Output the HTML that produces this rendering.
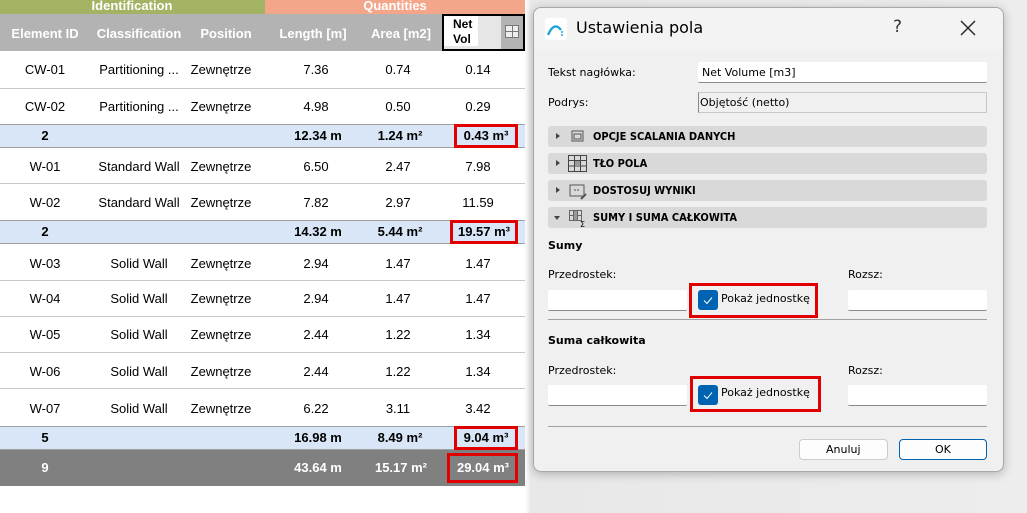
<!DOCTYPE html>
<html><head><meta charset="utf-8"><style>
*{box-sizing:border-box;margin:0;padding:0}
body{width:1027px;height:513px;position:relative;overflow:hidden;background:#fff;font-family:"Liberation Sans",Arial,sans-serif}
.a{position:absolute}
.t{position:absolute;font-size:13px;color:#000;white-space:nowrap}
.c{transform:translateX(-50%)}
.hd{color:#fff;font-weight:bold;font-size:13px}
.row{position:absolute;left:0;width:525px;border-bottom:1px solid #c8c8c8}
.sub{background:#d9e6f7;border-bottom:1px solid #a0a0a0;border-top:1px solid #a0a0a0}
.red{position:absolute;border:3px solid #e00000}
.d{font-family:"Segoe UI","DejaVu Sans",sans-serif;font-size:11px;color:#000;position:absolute;white-space:nowrap}
.inp{position:absolute;background:#fff;border-bottom:1px solid #8a8a8a;border-radius:2px}
.bar{position:absolute;left:548px;width:439px;height:21px;background:#d9d9d9;border-radius:3px}
.bar span{position:absolute;left:45px;top:4px;font-weight:bold;font-size:11px;font-family:"DejaVu Sans",sans-serif;transform:scaleX(.9);transform-origin:left}
.tri{position:absolute;left:8px;top:7px;width:0;height:0;border-left:4px solid #444;border-top:3.5px solid transparent;border-bottom:3.5px solid transparent}
.cb{position:absolute;width:20px;height:20px;background:#0063b1;border-radius:3px}
</style></head><body>
<div class="a" style="left:525px;top:0;width:502px;height:513px;background:linear-gradient(90deg,#fff 0,#e8e8e8 6px,#ededed 100%)"></div>
<!-- table -->
<div class="a" style="left:0;top:0;width:265px;height:14px;background:#a2b464"></div>
<div class="a" style="left:265px;top:0;width:260px;height:14px;background:#f4a68a"></div>
<div class="t hd c" style="left:132px;top:-2px">Identification</div>
<div class="t hd c" style="left:395px;top:-2px">Quantities</div>
<div class="a" style="left:0;top:14px;width:525px;height:37px;background:#b3b3b3"></div>
<div class="t hd c" style="left:45px;top:26px">Element ID</div>
<div class="t hd c" style="left:139px;top:26px">Classification</div>
<div class="t hd c" style="left:226px;top:26px">Position</div>
<div class="t hd c" style="left:313px;top:26px">Length [m]</div>
<div class="t hd c" style="left:401px;top:26px">Area [m2]</div>
<div class="a" style="left:442px;top:14px;width:83px;height:37px;border:2px solid #000;background:#b3b3b3"></div>
<div class="a" style="left:444px;top:16px;width:57px;height:33px;background:#e6e6e6"></div>
<div class="a" style="left:444px;top:16px;width:34px;height:30px;background:#fff"></div>
<div class="t" style="left:453px;top:17px;font-weight:bold;font-size:12px">Net</div>
<div class="t" style="left:453px;top:32px;font-weight:bold;font-size:12px">Vol</div>
<div class="a" style="left:505px;top:25px;width:14px;height:13px;border:1px solid #777;background:linear-gradient(#777,#777) 6px 0/1px 100% no-repeat,linear-gradient(#777,#777) 0 5px/100% 1px no-repeat,#eee"></div>

<div class="row" style="top:51px;height:38px"></div>
<div class="row" style="top:89px;height:35px;border:none"></div>
<div class="row sub" style="top:124px;height:24px"></div>
<div class="row" style="top:148px;height:36px"></div>
<div class="row" style="top:184px;height:36px;border:none"></div>
<div class="row sub" style="top:220px;height:24px"></div>
<div class="row" style="top:244px;height:37px"></div>
<div class="row" style="top:281px;height:36px"></div>
<div class="row" style="top:317px;height:36px"></div>
<div class="row" style="top:353px;height:36px"></div>
<div class="row" style="top:389px;height:37px;border:none"></div>
<div class="row sub" style="top:426px;height:24px"></div>
<div class="a" style="left:0;top:450px;width:525px;height:36px;background:#808080"></div>

<div class="t c" style="left:45px;top:62px">CW-01</div><div class="t c" style="left:139px;top:62px">Partitioning ...</div><div class="t c" style="left:221px;top:62px">Zewnętrze</div><div class="t c" style="left:316px;top:62px">7.36</div><div class="t c" style="left:398px;top:62px">0.74</div><div class="t c" style="left:478px;top:62px">0.14</div>
<div class="t c" style="left:45px;top:99px">CW-02</div><div class="t c" style="left:139px;top:99px">Partitioning ...</div><div class="t c" style="left:221px;top:99px">Zewnętrze</div><div class="t c" style="left:316px;top:99px">4.98</div><div class="t c" style="left:398px;top:99px">0.50</div><div class="t c" style="left:478px;top:99px">0.29</div>
<div class="t c" style="left:45px;top:128px;font-weight:bold">2</div><div class="t c" style="left:318px;top:128px;font-weight:bold">12.34 m</div><div class="t c" style="left:400px;top:128px;font-weight:bold">1.24 m²</div><div class="t c" style="left:486px;top:128px;font-weight:bold">0.43 m³</div>
<div class="t c" style="left:45px;top:159px">W-01</div><div class="t c" style="left:139px;top:159px">Standard Wall</div><div class="t c" style="left:221px;top:159px">Zewnętrze</div><div class="t c" style="left:316px;top:159px">6.50</div><div class="t c" style="left:398px;top:159px">2.47</div><div class="t c" style="left:478px;top:159px">7.98</div>
<div class="t c" style="left:45px;top:195px">W-02</div><div class="t c" style="left:139px;top:195px">Standard Wall</div><div class="t c" style="left:221px;top:195px">Zewnętrze</div><div class="t c" style="left:316px;top:195px">7.82</div><div class="t c" style="left:398px;top:195px">2.97</div><div class="t c" style="left:478px;top:195px">11.59</div>
<div class="t c" style="left:45px;top:224px;font-weight:bold">2</div><div class="t c" style="left:318px;top:224px;font-weight:bold">14.32 m</div><div class="t c" style="left:400px;top:224px;font-weight:bold">5.44 m²</div><div class="t c" style="left:484px;top:224px;font-weight:bold">19.57 m³</div>
<div class="t c" style="left:45px;top:256px">W-03</div><div class="t c" style="left:139px;top:256px">Solid Wall</div><div class="t c" style="left:221px;top:256px">Zewnętrze</div><div class="t c" style="left:316px;top:256px">2.94</div><div class="t c" style="left:398px;top:256px">1.47</div><div class="t c" style="left:478px;top:256px">1.47</div>
<div class="t c" style="left:45px;top:291px">W-04</div><div class="t c" style="left:139px;top:291px">Solid Wall</div><div class="t c" style="left:221px;top:291px">Zewnętrze</div><div class="t c" style="left:316px;top:291px">2.94</div><div class="t c" style="left:398px;top:291px">1.47</div><div class="t c" style="left:478px;top:291px">1.47</div>
<div class="t c" style="left:45px;top:327px">W-05</div><div class="t c" style="left:139px;top:327px">Solid Wall</div><div class="t c" style="left:221px;top:327px">Zewnętrze</div><div class="t c" style="left:316px;top:327px">2.44</div><div class="t c" style="left:398px;top:327px">1.22</div><div class="t c" style="left:478px;top:327px">1.34</div>
<div class="t c" style="left:45px;top:364px">W-06</div><div class="t c" style="left:139px;top:364px">Solid Wall</div><div class="t c" style="left:221px;top:364px">Zewnętrze</div><div class="t c" style="left:316px;top:364px">2.44</div><div class="t c" style="left:398px;top:364px">1.22</div><div class="t c" style="left:478px;top:364px">1.34</div>
<div class="t c" style="left:45px;top:401px">W-07</div><div class="t c" style="left:139px;top:401px">Solid Wall</div><div class="t c" style="left:221px;top:401px">Zewnętrze</div><div class="t c" style="left:316px;top:401px">6.22</div><div class="t c" style="left:398px;top:401px">3.11</div><div class="t c" style="left:478px;top:401px">3.42</div>
<div class="t c" style="left:45px;top:430px;font-weight:bold">5</div><div class="t c" style="left:318px;top:430px;font-weight:bold">16.98 m</div><div class="t c" style="left:400px;top:430px;font-weight:bold">8.49 m²</div><div class="t c" style="left:486px;top:430px;font-weight:bold">9.04 m³</div>
<div class="t c" style="left:45px;top:460px;font-weight:bold;color:#fff">9</div><div class="t c" style="left:318px;top:460px;font-weight:bold;color:#fff">43.64 m</div><div class="t c" style="left:401px;top:460px;font-weight:bold;color:#fff">15.17 m²</div><div class="t c" style="left:483px;top:460px;font-weight:bold;color:#fff">29.04 m³</div>

<div class="red" style="left:454px;top:124px;width:64px;height:24px"></div>
<div class="red" style="left:450px;top:220px;width:68px;height:24px"></div>
<div class="red" style="left:454px;top:426px;width:64px;height:24px"></div>
<div class="red" style="left:447px;top:453px;width:71px;height:30px"></div>

<!-- dialog -->
<div class="a" style="left:533px;top:7px;width:471px;height:465px;background:#f0f0f0;border:1px solid #a8a8a8;border-radius:8px;box-shadow:0 2px 10px rgba(0,0,0,.25)"></div>
<div class="a" style="left:534px;top:8px;width:469px;height:41px;background:#f3f3f3;border-radius:8px 8px 0 0"></div>
<svg class="a" style="left:545px;top:18px" width="22" height="22" viewBox="0 0 22 22"><rect width="22" height="22" rx="3" fill="#fff"/><path d="M3 17 Q9 3 16 12" stroke="#1fa3d8" stroke-width="2.4" fill="none"/><circle cx="17" cy="14" r="1" fill="#1fa3d8"/><circle cx="17" cy="17" r="1" fill="#1fa3d8"/></svg>
<div class="d" style="left:576px;top:18px;font-size:16px">Ustawienia pola</div>
<div class="d" style="left:893px;top:17px;font-size:17px;color:#333">?</div>
<svg class="a" style="left:960px;top:20px" width="16" height="16"><path d="M1 1L15 15M15 1L1 15" stroke="#222" stroke-width="1.4"/></svg>

<div class="d" style="left:548px;top:66px">Tekst nagłówka:</div>
<div class="inp" style="left:698px;top:62px;width:289px;height:21px"></div>
<div class="d" style="left:702px;top:66px">Net Volume [m3]</div>
<div class="d" style="left:548px;top:96px">Podrys:</div>
<div class="a" style="left:698px;top:92px;width:289px;height:21px;border:1px solid #c8c8c8;border-left-color:#888"></div>
<div class="d" style="left:700px;top:96px">Objętość (netto)</div>

<div class="bar" style="top:126px"><div class="tri"></div><svg class="a" style="left:22px;top:4px" width="14" height="13"><rect x="2" y="1" width="11" height="10" fill="none" stroke="#555"/><rect x="4" y="4" width="7" height="5" fill="none" stroke="#555"/></svg><span>OPCJE SCALANIA DANYCH</span></div>
<div class="bar" style="top:153px"><div class="tri"></div><svg class="a" style="left:20px;top:2px" width="19" height="17"><path d="M0.5 0.5h18v16h-18zM6.5 0.5v16M12.5 0.5v16M0.5 5.5h18M0.5 11h18" stroke="#444" fill="none"/><rect x="7" y="6" width="5" height="5" fill="#999"/></svg><span>TŁO POLA</span></div>
<div class="bar" style="top:180px"><div class="tri"></div><svg class="a" style="left:20px;top:2px" width="20" height="18"><path d="M2 3h14v11H2z" stroke="#555" fill="none"/><path d="M6 8h6" stroke="#555" stroke-dasharray="2 1"/><path d="M13 17l5-5" stroke="#555" stroke-width="2"/></svg><span>DOSTOSUJ WYNIKI</span></div>
<div class="bar" style="top:207px"><div class="a" style="left:6px;top:9px;border-top:4px solid #444;border-left:3.5px solid transparent;border-right:3.5px solid transparent"></div><svg class="a" style="left:20px;top:1px" width="20" height="20"><path d="M1.5 2.5h12v10h-12zM5.5 2.5v10M9.5 2.5v10M1.5 7.5h12" stroke="#666" fill="none"/><rect x="6" y="3" width="3" height="9" fill="#999"/><text x="12" y="19" font-size="8" font-family="DejaVu Sans">Σ</text></svg><span>SUMY I SUMA CAŁKOWITA</span></div>

<div class="d" style="left:548px;top:239px;font-weight:bold">Sumy</div>
<div class="d" style="left:548px;top:268px">Przedrostek:</div>
<div class="d" style="left:848px;top:268px">Rozsz:</div>
<div class="inp" style="left:548px;top:290px;width:139px;height:21px"></div>
<div class="inp" style="left:848px;top:290px;width:139px;height:21px"></div>
<div class="red" style="left:689px;top:283px;width:129px;height:35px"></div>
<div class="cb" style="left:698px;top:290px"><svg width="20" height="20"><path d="M6 10.5l3 3 5-6" stroke="#fff" stroke-width="1" fill="none"/></svg></div>
<div class="d" style="left:721px;top:292px">Pokaż jednostkę</div>
<div class="a" style="left:548px;top:319px;width:439px;height:1px;background:#a0a0a0"></div>

<div class="d" style="left:548px;top:334px;font-weight:bold">Suma całkowita</div>
<div class="d" style="left:548px;top:364px">Przedrostek:</div>
<div class="d" style="left:848px;top:364px">Rozsz:</div>
<div class="inp" style="left:548px;top:385px;width:139px;height:21px"></div>
<div class="inp" style="left:848px;top:385px;width:139px;height:21px"></div>
<div class="red" style="left:690px;top:376px;width:131px;height:36px"></div>
<div class="cb" style="left:698px;top:385px"><svg width="20" height="20"><path d="M6 10.5l3 3 5-6" stroke="#fff" stroke-width="1" fill="none"/></svg></div>
<div class="d" style="left:721px;top:386px">Pokaż jednostkę</div>
<div class="a" style="left:548px;top:426px;width:439px;height:1px;background:#a0a0a0"></div>

<div class="a" style="left:799px;top:439px;width:89px;height:21px;background:#fdfdfd;border:1px solid #ccc;border-radius:4px"></div>
<div class="d" style="left:826px;top:443px">Anuluj</div>
<div class="a" style="left:899px;top:439px;width:88px;height:21px;background:#fdfdfd;border:1px solid #0063b1;border-radius:4px"></div>
<div class="d" style="left:935px;top:443px">OK</div>
</body></html>
